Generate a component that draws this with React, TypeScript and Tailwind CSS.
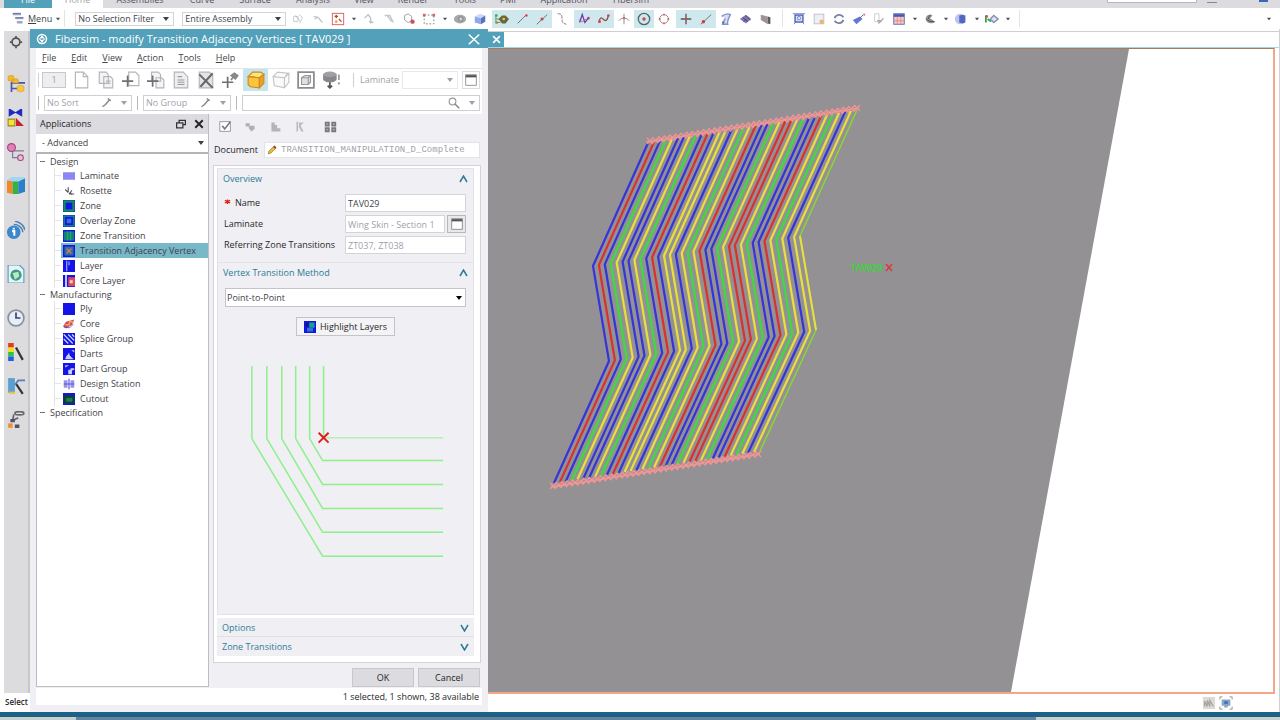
import { useState, type ReactNode } from 'react'
import clsx from 'clsx'

function Svg({ children, size = 'w-4 h-4' }: { children: ReactNode; size?: string }) {
  return (
    <svg viewBox="0 0 16 16" className={clsx(size, 'shrink-0')} fill="none" aria-hidden="true">
      {children}
    </svg>
  )
}

function Caret({ className = 'text-zinc-700' }: { className?: string }) {
  return (
    <svg viewBox="0 0 6 4" className={clsx('w-[6px] h-[4px] shrink-0', className)} aria-hidden="true">
      <path d="M0 0h6L3 4z" fill="currentColor" />
    </svg>
  )
}

const ribbonTabs = [
  { label: 'Assemblies', width: 'w-[74px]' },
  { label: 'Curve', width: 'w-[50px]' },
  { label: 'Surface', width: 'w-[56px]' },
  { label: 'Analysis', width: 'w-[60px]' },
  { label: 'View', width: 'w-[42px]' },
  { label: 'Render', width: 'w-[56px]' },
  { label: 'Tools', width: 'w-[48px]' },
  { label: 'PMI', width: 'w-[38px]' },
  { label: 'Application', width: 'w-[74px]' },
  { label: 'Fibersim', width: 'w-[60px]' },
]

interface Tool {
  name: string
  art?: ReactNode
  on?: boolean
  gap?: boolean
  kind?: 'caret' | 'sep'
}

const cubeArt = (front: string, top: string, side: string) => (
  <>
    <path d="M2 5l6-3 6 2-5 3z" fill={top} />
    <path d="M2 5l7 2v7l-7-2z" fill={front} />
    <path d="M9 7l5-3v7l-5 3z" fill={side} />
  </>
)

const tools: Tool[] = [
  { name: 'Assembly', art: <><path d="M3 5h5v6H3zM9 3l4 3-3 7" stroke="#c5c5c8" /><path d="M5 4l5 6" stroke="#b5b5b8" /></> },
  { name: 'Move up', art: <path d="M3 5l5 1 5 6M4 8l4-2" stroke="#c5c5c8" strokeWidth="1.500" /> },
  { name: 'Snap', art: <><rect x="1.500" y="1.500" width="13" height="13" stroke="#e0505a" /><path d="M4 5h4M6 3v4M9 8l3 3" stroke="#b04a30" strokeWidth="1.500" /><circle cx="6" cy="11" r="1.500" fill="#e8a040" /></> },
  { name: 'Snap list', kind: 'caret' },
  { name: 'Rotate', art: <path d="M3 7l4-4 3 4M10 7v6M8 11l5 1" stroke="#bdbdc0" strokeWidth="1.500" /> },
  { name: 'Redirect', art: <path d="M3 4h6l4 8M6 4l5 7" stroke="#c5c5c8" strokeWidth="1.500" /> },
  { name: 'Deselect', art: <><path d="M3 4l4-2 4 3v5l-4 2-4-3z" stroke="#98989c" /><circle cx="12" cy="11" r="2.500" fill="#c9505c" /></> },
  { name: 'Rectangle', art: <><rect x="2.500" y="3.500" width="11" height="10" stroke="#777" strokeDasharray="2 2" /><path d="M1 2h3v3H1zM12 2h3v3h-3z" fill="#d06a6a" /></> },
  { name: 'Rectangle list', kind: 'caret' },
  { name: 'Shaded', art: <><ellipse cx="8" cy="8" rx="7" ry="5" fill="#a8a6aa" /><circle cx="9" cy="8" r="2.500" fill="#d2d0d4" stroke="#77757a" /></> },
  { name: 'Solid body', art: cubeArt('#8ea8e8', '#c9d8f8', '#5572c4') },
  { name: 'Enable snap', on: true, gap: true, art: <><path d="M1 3v10M1 8h6M1 12h5" stroke="#4a9c4e" /><path d="M4 8l4-4h4l4 4-4 5H8z" fill="#67683c" /><circle cx="1.500" cy="4" r="1.500" fill="#30b040" /><circle cx="10" cy="8" r="1.500" fill="#e8c840" /><circle cx="2" cy="12" r="1.500" fill="#d07030" /></> },
  { name: 'End point', on: true, art: <><path d="M3 13L12 4" stroke="#666" /><circle cx="13" cy="4" r="1.500" fill="#d84050" /></> },
  { name: 'Mid point', on: true, art: <><path d="M2 14L14 3" stroke="#666" /><circle cx="8" cy="8" r="1.800" fill="#c84848" /></> },
  { name: 'Control point', art: <path d="M3 2c5 0 5 2 5 6s1 5 5 6" stroke="#7a6a70" strokeDasharray="4 1" /> },
  { name: 'Spline pole', on: true, gap: true, art: <><path d="M3 12L6 3l3 9 4-5" stroke="#6040b8" strokeWidth="1.500" /><path d="M2 9l4 2 5-3" stroke="#d05070" /><circle cx="13" cy="7" r="1.500" fill="#b04080" /></> },
  { name: 'Spline point', on: true, art: <><path d="M2 12c2-8 4-5 6-3s4 0 5-5" stroke="#905048" strokeWidth="1.500" /><circle cx="3" cy="11" r="1.500" fill="#d84050" /><circle cx="13" cy="4" r="1.500" fill="#d84050" /></> },
  { name: 'Intersection', art: <><path d="M8 2v12M2 10c3-4 9-4 12 0" stroke="#8a8084" /><circle cx="8" cy="7" r="1.300" fill="#d06060" /></> },
  { name: 'Arc center', on: true, art: <><circle cx="8" cy="8" r="6.500" stroke="#4d686c" strokeWidth="1.500" /><circle cx="8" cy="8" r="2" fill="#d04848" /></> },
  { name: 'Quadrant', art: <><circle cx="8" cy="8" r="5" stroke="#8a8088" /><path d="M8 2v2M8 12v2M2 8h2M12 8h2" stroke="#e06060" strokeWidth="2" /></> },
  { name: 'Existing point', on: true, gap: true, art: <><path d="M8 2v12M2 8h12" stroke="#555" strokeWidth="1.500" /><circle cx="8" cy="8" r="1.500" fill="#c84848" /></> },
  { name: 'Point on curve', on: true, art: <><path d="M2 14L14 3" stroke="#666" /><circle cx="5" cy="11" r="2" fill="#d04040" /></> },
  { name: 'Point on face', art: <><path d="M3 5c4-3 8-3 10-2-2 4-4 8-3 11H4c0-4 3-4 3-7" stroke="#8090c8" strokeWidth="1.500" fill="#d5dcf0" /><circle cx="5" cy="12" r="1.300" fill="#5070c0" /></> },
  { name: 'Bounded grid', art: <><path d="M1 8l7-5 6 5-6 5z" fill="#7a78b8" /><path d="M4 6l6 5M7 4l6 5M5 11l6-5" stroke="#444880" /><circle cx="9" cy="7" r="1.300" fill="#c06060" /></> },
  { name: 'Facet vertex', art: <><path d="M2 3l8 2v9l-8-5z" fill="#9a989a" /><path d="M10 5l3 1v8l-3-1z" fill="#5c5a5c" /><path d="M4 5l6 7" stroke="#c97777" /></> },
  { name: 'Separator', kind: 'sep' },
  { name: 'Fit', art: <><rect x="3.500" y="3.500" width="9" height="8" fill="#dce4fa" stroke="#4458b8" strokeWidth="1.500" /><path d="M2 14l4-4M14 14l-4-4M1 2h14" stroke="#6674b8" /><circle cx="8" cy="7" r="2" stroke="#7784c8" /></> },
  { name: 'Zoom window', art: <><rect x="2.500" y="2.500" width="11" height="11" fill="#eef0f6" stroke="#b8bcc8" /><circle cx="11" cy="11" r="2.500" fill="#e8b868" /></> },
  { name: 'Rotate view', art: <><path d="M13 6a5.500 5.500 0 0 0-10 1M3 10a5.500 5.500 0 0 0 10-1" stroke="#7480a8" strokeWidth="2" /></> },
  { name: 'Brush', art: <><path d="M1 9l8-4 3 3-7 6z" fill="#6078d0" /><path d="M9 7l4-4" stroke="#667" /><circle cx="14" cy="3" r="1.200" fill="#e08080" /></> },
  { name: 'Perspective', art: <><path d="M3 2h5v9H3z" stroke="#c8c8cc" /><path d="M7 13l3-2 3-4M6 10h4" stroke="#a8a8ac" strokeWidth="1.500" /></> },
  { name: 'Layout', art: <><rect x="2" y="2" width="12" height="12" fill="#f6c9c4" stroke="#5064b8" /><path d="M2 4h12" stroke="#4458b8" strokeWidth="3" /><path d="M6 6v8M10 6v8M2 10h12" stroke="#e08888" /></> },
  { name: 'Layout list', kind: 'caret' },
  { name: 'Section', art: <><path d="M3 8c0-5 6-6 8-4L8 7l6 4c-3 3-10 3-11-3z" fill="#8f9092" /><path d="M4 8c2 3 5 3 9 3M8 3L6 8" stroke="#4d4d50" /></> },
  { name: 'Section list', kind: 'caret' },
  { name: 'Render style', art: <><circle cx="7" cy="8" r="6" fill="#bcc4f0" /><path d="M6 4l4-1 3 1v8l-3 1-4-1z" fill="#5268c0" /></> },
  { name: 'Render list', kind: 'caret' },
  { name: 'Show and hide', art: <><path d="M1 4v8M3 8l4 3" stroke="#30a050" strokeWidth="2" /><circle cx="2" cy="5" r="1.500" fill="#e04848" /><path d="M6 8l4-4 5 4-5 4z" fill="#dde0ee" stroke="#8890b0" strokeWidth="1.500" /></> },
  { name: 'Show list', kind: 'caret' },
  { name: 'Separator', kind: 'sep' },
]

function ToolStrip() {
  return (
    <div className="flex items-center">
      {tools.map((t, i) => {
        if (t.kind === 'sep') {
          return <span key={i} className="w-[13px] flex justify-center"><span className="w-px h-[17px] bg-zinc-200" /></span>
        }
        if (t.kind === 'caret') {
          return (
            <button key={i} aria-label={t.name} className="w-[11px] h-[18px] flex items-center justify-center">
              <Caret className="text-zinc-600 scale-75" />
            </button>
          )
        }
        return (
          <button
            key={i}
            aria-label={t.name}
            className={clsx('w-5 h-[18px] flex items-center justify-center', t.gap && 'ml-0.5', t.on && 'bg-[#cfe8ee]')}
          >
            <Svg size="w-[14px] h-[14px]">{t.art}</Svg>
          </button>
        )
      })}
    </div>
  )
}

function FilterSelect({ label, options, width }: { label: string; options: string[]; width: string }) {
  return (
    <label className={clsx('flex items-center h-[14px] border border-[#d4d3d8] bg-white pl-[2px] pr-1', width)}>
      <select aria-label={label} className="flex-1 min-w-0 appearance-none bg-transparent text-[9px] leading-3 text-zinc-700 outline-none">
        {options.map((o) => (
          <option key={o}>{o}</option>
        ))}
      </select>
      <Caret />
    </label>
  )
}

const railItems: { name: string; art: ReactNode; pad: string }[] = [
  { name: 'Options', pad: 'h-[42px]', art: <><circle cx="8" cy="8" r="4.500" stroke="#555" strokeWidth="2" /><path d="M8 1v2M8 13v2M1 8h2M13 8h2" stroke="#555" strokeWidth="2" /></> },
  { name: 'Assembly navigator', pad: 'h-[34px]', art: <><path d="M4 6v9M4 12h5M4 7h12" stroke="#4a56a8" strokeWidth="1.500" /><path d="M1 1l3-1 2 1v4H1zM5 4l3-1 2 1v3H5z" fill="#f4b820" stroke="#d89a20" strokeWidth=".5" /><path d="M9 10l3-1 3 1v4l-3 1-3-1z" fill="#f6c83c" stroke="#d89a20" strokeWidth=".5" /></> },
  { name: 'Constraint navigator', pad: 'h-[34px]', art: <><path d="M2 0l5 3-5 3zM13 0L8 3l5 3z" fill="#2028c8" stroke="#2028c8" /><path d="M1 9h6v6H1z" fill="#f5e436" stroke="#a08820" /><path d="M8 8l7 7H8z" fill="#c82030" /></> },
  { name: 'Part navigator', pad: 'h-[34px]', art: <><path d="M5 5v8h5M6 7h9" stroke="#80789c" /><circle cx="4" cy="4" r="3.500" fill="#e080b4" stroke="#a04880" /><circle cx="12" cy="13" r="2.500" fill="#eac0d8" stroke="#a05888" /></> },
  { name: 'Reuse library', pad: 'h-[44px]', art: <><path d="M0 3l5-2v14l-5-1z" fill="#f08828" /><path d="M5 4l5-2v13H5z" fill="#38b048" /><path d="M10 4l6-3v12l-6 2z" fill="#2a80c8" /><path d="M0 3l4-3h12l-6 4H6z" fill="#9cd8f0" /></> },
  { name: 'Web browser', pad: 'h-[44px]', art: <><circle cx="6" cy="10" r="6" fill="#3c86cc" /><path d="M6 6v1.500M4.500 9H6.500v4" stroke="#fff" strokeWidth="1.800" /><path d="M6 3c4 0 8 3 8 7M7 0c4 1 8 4 9 8" stroke="#4880b8" strokeWidth="1.300" /></> },
  { name: 'History', pad: 'h-[44px]', art: <><path d="M1 0h10l4 4v12H1z" fill="#e6f3fa" stroke="#5a9cc0" /><circle cx="8" cy="9" r="5" fill="#3a9c78" /><path d="M5 7l5-1 1 4-4 3z" fill="#b8e8c8" /></> },
  { name: 'Clock', pad: 'h-[34px]', art: <><circle cx="8" cy="8" r="7" fill="#e8eef8" stroke="#8890a0" strokeWidth="1.500" /><path d="M8 3v5h4" stroke="#3a4468" strokeWidth="1.500" /></> },
  { name: 'Materials', pad: 'h-[34px]', art: <><path d="M1 0h5v4H1z" fill="#e83820" /><path d="M1 4h5v4H1z" fill="#f0e020" /><path d="M1 8h5v4H1z" fill="#30c048" /><path d="M1 12h5v4H1z" fill="#2060e0" /><path d="M8 4l6 11" stroke="#333" strokeWidth="2" /></> },
  { name: 'Process studio', pad: 'h-[34px]', art: <><path d="M1 1h6v13H1z" fill="#58a0d0" /><path d="M2 14h5" stroke="#f0c040" strokeWidth="2" /><path d="M8 6l6 9" stroke="#333" strokeWidth="2" /><path d="M7 7l3-4h6" stroke="#5a7cb8" strokeWidth="1.500" /></> },
  { name: 'Manufacturing', pad: 'h-[34px]', art: <><path d="M5 9l1-6M6 8l4-2" stroke="#666" strokeWidth="1.500" /><ellipse cx="11" cy="2" rx="4" ry="1.500" stroke="#666" strokeWidth="1.500" /><path d="M1 11h4v4H1z" fill="#f09030" /><path d="M3 7h4v3H3zM7 12h4v3H7z" fill="#505068" /></> },
]

const G = '#b4b4b8'
const actionTools: { name: string; art: ReactNode; on?: boolean }[] = [
  { name: 'New', art: <><path d="M3 1h7l4 4v10H3z" fill="#fff" stroke={G} /><path d="M10 1v4h4" stroke={G} /></> },
  { name: 'Copy', art: <><path d="M2 1h6l2 2v8H2zM6 5h6l2 2v8H6z" fill="#f4f4f6" stroke={G} /><path d="M8 9h4M8 11h4" stroke={G} /></> },
  { name: 'Insert', art: <><path d="M6 1h6l3 3v9H6z" fill="#fff" stroke={G} /><path d="M0 9h10M5 4v10" stroke="#707074" strokeWidth="1.500" /></> },
  { name: 'Insert copy', art: <><path d="M4 1h6l2 2v6H4zM8 6h5l2 2v7H8z" fill="#f4f4f6" stroke={G} /><path d="M0 9h10M5 4v10" stroke="#707074" strokeWidth="1.500" /></> },
  { name: 'Edit', art: <><path d="M2 1h8l4 4v10H2z" fill="#eeeef0" stroke={G} /><path d="M5 5h4M5 8h6M5 10h6M5 12h6" stroke="#98989c" /></> },
  { name: 'Delete', art: <><path d="M2 1h9l3 3v11H2z" fill="#e4e4e6" stroke={G} /><path d="M2 3l12 12M14 2L3 14" stroke="#68686c" strokeWidth="1.800" /></> },
  { name: 'Link', art: <><path d="M0 10h10M5 5v10" stroke="#707074" strokeWidth="1.500" /><path d="M7 4l4-3 4 3-3 4z" fill="#88888c" /><path d="M11 4l-3 4" stroke="#88888c" strokeWidth="1.500" /></> },
  { name: 'Shaded box', on: true, art: <><path d="M1 5l4-4h7l3 2-4 3z" fill="#fde47c" stroke="#d08820" /><path d="M1 5l10 1v9l-8-1-2-2z" fill="#fbc43a" stroke="#d08820" /><path d="M11 6l4-3v8l-4 4z" fill="#eda024" stroke="#d08820" /></> },
  { name: 'Wire box', art: <><path d="M1 5l4-4 9 1-3 4zM1 5l10 1v9L2 13zM11 6l4-4v8l-4 5" fill="#fafafa" stroke="#c4c4c8" /></> },
  { name: 'Zoom to', art: <><rect x="1" y="1" width="14" height="14" stroke="#88888c" strokeWidth="1.500" /><path d="M4 6l3-2h5v6l-2 2H4zM4 6h6v6M10 6l2-2" fill="#e0e0e4" stroke="#98989c" /></> },
  { name: 'Export', art: <><path d="M1 3v5c3 3 9 3 12 0V3z" fill="#88888c" /><ellipse cx="7" cy="3" rx="6" ry="2.500" fill="#a0a0a4" /><path d="M7 10v5M5 13l2 2 2-2" stroke="#555" strokeWidth="1.500" /><path d="M15 3v5M15 10v2" stroke="#999" strokeWidth="1.500" /></> },
]

const B = '#1414e6'
const squareArt = (inner: ReactNode) => (
  <>
    <rect x="0" y="0" width="16" height="16" fill={B} />
    {inner}
  </>
)

const tree: { label: string; items: { label: string; art: ReactNode }[] }[] = [
  {
    label: 'Design',
    items: [
      { label: 'Laminate', art: <rect x="0" y="3" width="16" height="10" fill="#8c86f0" /> },
      { label: 'Rosette', art: <path d="M7 3v6M3 6l4 4M8 12l4-5M8 12h7M10 10l2 3" stroke="#555" strokeWidth="1.500" /> },
      { label: 'Zone', art: squareArt(<rect x="2" y="2" width="12" height="12" stroke="#12905c" strokeWidth="3" />) },
      { label: 'Overlay Zone', art: squareArt(<><rect x="1.500" y="1.500" width="13" height="13" stroke="#108888" strokeWidth="2" /><path d="M5 5h6v6H5z" fill="#3c70d0" /></>) },
      { label: 'Zone Transition', art: squareArt(<><path d="M1 2h14v12H1z" fill="#127a88" /><path d="M6 2v12M10 2v12" stroke="#20b050" strokeWidth="2" /></>) },
      { label: 'Transition Adjacency Vertex', art: squareArt(<><rect x="2" y="2" width="12" height="12" fill="#2f70a0" /><path d="M5 5l6 6M11 5l-6 6" stroke="#d87860" strokeWidth="2" /></>) },
      { label: 'Layer', art: squareArt(<path d="M5 1v14M8 2v5" stroke="#a8b4f8" strokeWidth="1.500" />) },
      { label: 'Core Layer', art: squareArt(<><path d="M4 0v16" stroke="#fff" strokeWidth="2" /><path d="M7 3h9v12H7z" fill="#d84868" /><path d="M9 7h4v4H9z" fill="#f8d0a8" /></>) },
    ],
  },
  {
    label: 'Manufacturing',
    items: [
      { label: 'Ply', art: squareArt(null) },
      { label: 'Core', art: <><path d="M0 11l4-6 11-3-3 7-8 5z" fill="#d84860" /><path d="M3 9h5l1-4h5" stroke="#f0a858" strokeWidth="2" /><path d="M1 12l8 1 5-5" stroke="#5040c0" /></> },
      { label: 'Splice Group', art: squareArt(<path d="M1 8l6 6M1 2l12 12M7 2l8 8M12 2l3 3" stroke="#d0d8ff" strokeWidth="1.500" />) },
      { label: 'Darts', art: squareArt(<path d="M3 15c1-5 4-6 5-9l1 4 5 5M11 3h4v3" fill="#c8ccff" />) },
      { label: 'Dart Group', art: squareArt(<path d="M3 3h5l-5 3M7 15V9h3v-2h5v2l-3 1v5" fill="#c8ccff" />) },
      { label: 'Design Station', art: <><path d="M1 3h5v10H1zM10 3h5v10h-5z" fill="#9894ee" /><path d="M8 1v14M1 8h14" stroke="#5a54d8" strokeWidth="1.500" /></> },
      { label: 'Cutout', art: squareArt(<><rect x="1" y="3" width="14" height="11" fill="#0c4030" /><path d="M5 7h7v4H5z" fill="#108050" stroke="#208850" /></>) },
    ],
  },
  { label: 'Specification', items: [] },
]

function ApplicationsPanel() {
  const [selected, setSelected] = useState('Transition Adjacency Vertex')
  return (
    <section className="w-[173px] shrink-0 flex flex-col border-r border-[#bdbcc2] bg-white">
      <div className="h-[20px] flex items-center gap-2 bg-[#dcdbe0] pl-1 pr-1 text-zinc-800">
        <h2 className="flex-1 text-[9px] leading-3 font-medium">Applications</h2>
        <button aria-label="Float"><Svg size="w-[10px] h-[10px] block"><path d="M5 5V2h10v7h-3M1 6h10v8H1z" stroke="#333" strokeWidth="2" /></Svg></button>
        <button aria-label="Close panel"><Svg size="w-[10px] h-[10px] block"><path d="M2 2l12 12M14 2L2 14" stroke="#222" strokeWidth="3" /></Svg></button>
      </div>
      <label className="h-[20px] flex items-center border-b-2 border-[#b4b3b8] pl-[6px] pr-1">
        <select aria-label="Application level" className="flex-1 min-w-0 appearance-none bg-transparent text-[9px] leading-3 text-zinc-700 outline-none">
          <option>- Advanced</option>
        </select>
        <Caret />
      </label>
      <ul className="flex-1 border-l border-b border-[#bdbcc2] pt-px text-[9px] text-zinc-700">
        {tree.map((group) => (
          <li key={group.label}>
            <div className="h-[13px] flex items-center pl-[3px]">
              <span className="w-[5px] h-px bg-zinc-500 mr-[5px]" />
              {group.label}
            </div>
            <ul className="ml-[17px] border-l border-zinc-200">
              {group.items.map((item) => (
                <li key={item.label} className="flex items-center h-[15px]">
                  <span className="w-[6px] h-px bg-zinc-200" />
                  <button
                    onClick={() => setSelected(item.label)}
                    className={clsx(
                      'flex-1 h-[15px] flex items-center gap-[5px] pl-[2px] text-left whitespace-nowrap',
                      selected === item.label && 'bg-[#78b8c8]',
                    )}
                  >
                    <Svg size="w-[12px] h-[12px]">{item.art}</Svg>
                    {item.label}
                  </button>
                </li>
              ))}
            </ul>
          </li>
        ))}
      </ul>
    </section>
  )
}

function SectionHeader({ title, open, onClick }: { title: string; open: boolean; onClick: () => void }) {
  return (
    <button onClick={onClick} aria-expanded={open} className="w-full h-[19px] flex items-center justify-between pl-[5px] pr-[5px] text-[9px] font-medium text-[#2b7c98]">
      {title}
      <svg viewBox="0 0 9 8" className="w-[9px] h-[8px]" fill="none" aria-hidden="true">
        <path d={open ? 'M1 7L4.500 1L8 7' : 'M1 1l3.500 6L8 1'} stroke="#2b7c98" strokeWidth="1.500" />
      </svg>
    </button>
  )
}

const offsets = [
  [34, 206],
  [49, 182],
  [64, 158],
  [78, 134],
  [92, 110],
]

function OffsetDiagram() {
  return (
    <svg viewBox="0 0 256 232" className="w-full" fill="none" role="img" aria-label="Point-to-Point offsets">
      <g stroke="#8cf08c" strokeWidth="1.500">
        {offsets.map(([x, y]) => (
          <path key={x} d={`M${x} 15V88L105 ${y}H226`} />
        ))}
        <path d="M106 15V87" />
        <path d="M106 87H226" stroke="#b4f0b4" />
      </g>
      <path d="M101 82l10 10M111 82l-10 10" stroke="#dc2020" strokeWidth="2" />
    </svg>
  )
}

function PickIcon() {
  return <Svg size="w-[12px] h-[12px]"><rect x="1" y="1" width="14" height="14" fill="#fff" stroke="#777" /><path d="M1 3h14" stroke="#555" strokeWidth="3" /></Svg>
}

const field = 'w-full min-w-0 border border-[#d4d3d8] bg-white px-[2px] text-[9px] leading-3 outline-none'

function VertexForm() {
  const [open, setOpen] = useState({ overview: true, method: true, options: false, zones: false })
  const [name, setName] = useState('TAV029')
  const toggle = (key: keyof typeof open) => setOpen({ ...open, [key]: !open[key] })

  return (
    <div className="flex-1 min-w-0 flex flex-col pl-[4px]">
      <div className="h-[24px] flex items-center pl-[6px] gap-[12px]">
        <button aria-label="Validate"><Svg size="w-[13px] h-[13px] block"><path d="M1 2h13v12H1z" fill="#fff" stroke="#888" /><path d="M4 7l3 4 7-9" stroke="#777" strokeWidth="2" /></Svg></button>
        <button aria-label="Link zones"><Svg size="w-[13px] h-[13px] block"><path d="M2 4h5v4H2zM6 7h7v4l-4 3-3-4z" fill="#b0b0b4" /></Svg></button>
        <button aria-label="Stack"><Svg size="w-[13px] h-[13px] block"><path d="M3 3h4v3h3v4h4v4H3z" fill="#b4b4b8" /></Svg></button>
        <button aria-label="Unlink"><Svg size="w-[13px] h-[13px] block"><path d="M3 2h2v12H3zM6 3h6L8 7l4 7H9L6 9z" fill="#bcbcc0" /></Svg></button>
        <button aria-label="Grid" className="ml-[5px]"><Svg size="w-[13px] h-[13px] block"><path d="M1 2h6v6H1zM9 2h6v6H9zM1 9h6v6H1zM9 9h6v6H9z" fill="#78787c" /><path d="M3 5h2M11 5h2M3 12h2M11 12h2" stroke="#ddd" /></Svg></button>
      </div>
      <div className="h-[24px] mb-[3px] flex items-center gap-[3px] pl-px pr-px text-[9px] font-medium text-zinc-800">
        <label htmlFor="document" className="w-[47px]">Document</label>
        <div className="flex-1 min-w-0 h-[16px] flex items-center gap-1 bg-white border border-[#e4e3e8] pl-[2px]">
          <Svg size="w-[10px] h-[10px]"><path d="M2 14l1-4 8-8 3 3-8 8z" fill="#f0c030" stroke="#806020" /><path d="M11 2l3 3" stroke="#a03030" strokeWidth="3" /></Svg>
          <input id="document" readOnly value="TRANSITION_MANIPULATION_D_Complete" className="flex-1 min-w-0 bg-transparent font-['Liberation_Mono',monospace] text-[9px] leading-3 font-normal text-zinc-400 outline-none" />
        </div>
      </div>
      <div className="flex-1 flex flex-col bg-white border border-[#d4d3d8] pt-[2px] pb-[6px] pl-[3px] pr-[6px]">
        <div className="bg-[#f0eff3] border border-[#e2e1e6] h-[95px]">
          <SectionHeader title="Overview" open={open.overview} onClick={() => toggle('overview')} />
          {open.overview && (
            <div className="grid grid-cols-[121px_minmax(0,1fr)] gap-y-[3px] items-center pl-[6px] pr-[7px] pt-[6px] text-[9px] font-medium text-zinc-800">
              <label htmlFor="name" className="flex items-center gap-[4px]">
                <Svg size="w-[7px] h-[12px]"><path d="M8 0v10M2 2l12 6M14 2L2 8" stroke="#dc2020" strokeWidth="3" /></Svg>
                Name
              </label>
              <input id="name" value={name} onChange={(e) => setName(e.target.value)} className={clsx(field, 'h-[18px] text-zinc-700')} />
              <label htmlFor="laminate">Laminate</label>
              <div className="flex gap-[2px]">
                <input id="laminate" readOnly value="Wing Skin - Section 1" className={clsx(field, 'flex-1 h-[18px] text-zinc-400')} />
                <button aria-label="Choose laminate" className="w-[19px] h-[18px] shrink-0 flex items-center justify-center border border-[#b8b7bc] bg-[#e8e7ea]"><PickIcon /></button>
              </div>
              <label htmlFor="zones" className="whitespace-nowrap">Referring Zone Transitions</label>
              <input id="zones" readOnly value="ZT037, ZT038" className={clsx(field, 'h-[18px] text-zinc-400')} />
            </div>
          )}
        </div>
        <div className="flex-1 bg-[#f0eff3] border border-t-0 border-[#e2e1e6]">
          <SectionHeader title="Vertex Transition Method" open={open.method} onClick={() => toggle('method')} />
          {open.method && (
            <div className="flex flex-col items-center pt-[6px]">
              <label className="self-stretch mx-[7px] h-[19px] flex items-center border border-[#c4c3c8] bg-white pl-px pr-[3px]">
                <select aria-label="Vertex transition method" className="flex-1 min-w-0 appearance-none bg-transparent text-[9px] leading-3 text-zinc-700 outline-none">
                  <option>Point-to-Point</option>
                </select>
                <Caret className="text-black" />
              </label>
              <button className="mt-[10px] h-[19px] px-[7px] flex items-center gap-[4px] border border-[#c4c3c8] bg-[#f4f3f6] text-[9px] font-medium text-zinc-800">
                <Svg size="w-[12px] h-[12px]">{squareArt(<><path d="M7 2h7v7H7z" fill="#18a088" /><path d="M4 9h8v5H4z" fill="#2878c8" /><path d="M2 3h4v4H2z" fill="#102060" /></>)}</Svg>
                Highlight Layers
              </button>
              <div className="w-full mt-[15px]"><OffsetDiagram /></div>
            </div>
          )}
        </div>
        <div className="mt-[3px] h-[19px] bg-[#f0eff3] border-b border-[#e2e1e6]">
          <SectionHeader title="Options" open={open.options} onClick={() => toggle('options')} />
        </div>
        <div className="h-[19px] bg-[#f0eff3]">
          <SectionHeader title="Zone Transitions" open={open.zones} onClick={() => toggle('zones')} />
        </div>
      </div>
      <div className="h-[24px] flex items-end justify-end gap-[4px] pr-px text-[9px] font-medium text-zinc-800">
        <button className="w-[62px] h-[19px] border border-[#c8c7cc] bg-[#dcdbe0]">OK</button>
        <button className="w-[62px] h-[19px] border border-[#c8c7cc] bg-[#dcdbe0]">Cancel</button>
      </div>
    </div>
  )
}

function MiniCombo({ text }: { text: string }) {
  return (
    <button disabled className="w-[88px] h-[16px] flex items-center border border-[#cfced3] pl-[2px] pr-[4px] text-[9px] text-zinc-400">
      <span className="flex-1 text-left">{text}</span>
      <Svg size="w-[12px] h-[12px] mr-[8px]"><path d="M2 13l4-3 6-7M9 2l4 3" stroke="#888" strokeWidth="2" /></Svg>
      <Caret className="text-zinc-400" />
    </button>
  )
}

const menus = [
  ['F', 'ile'],
  ['E', 'dit'],
  ['V', 'iew'],
  ['A', 'ction'],
  ['T', 'ools'],
  ['H', 'elp'],
]

function FibersimDialog() {
  return (
    <section role="dialog" aria-label="Fibersim" className="w-[458px] shrink-0 flex flex-col bg-[#f0eff3]">
      <header className="h-[19px] flex items-center bg-[#52a0b9] pl-[6px] pr-[8px] text-white">
        <Svg size="w-[12px] h-[12px]"><circle cx="8" cy="8" r="6" stroke="#fff" strokeWidth="2" /><path d="M8 3l4 5-4 5-4-5z" fill="#fff" /><path d="M6 8h4" stroke="#52a0b9" strokeWidth="2" /></Svg>
        <h1 className="flex-1 pl-[7px] text-[11px] leading-3">Fibersim - modify Transition Adjacency Vertices [ TAV029 ]</h1>
        <button aria-label="Close dialog"><Svg size="w-[12px] h-[12px] block"><path d="M1 2l14 13M15 2L1 15" stroke="#fff" strokeWidth="2" /></Svg></button>
      </header>
      <div className="mx-[6px]">
        <nav className="h-[20px] flex items-center gap-[15px] bg-white pl-[6px] text-[9px] font-medium text-zinc-700">
          {menus.map(([key, rest]) => (
            <button key={key} className="whitespace-nowrap"><u>{key}</u>{rest}</button>
          ))}
        </nav>
        <div className="h-[23px] flex items-center bg-white border-t border-[#e4e3e8] pl-[2px] pr-[2px]">
          <span className="w-px h-[14px] bg-[#cfced3]" />
          <div className="ml-[3px] mr-[2px] w-[24px] h-[16px] shrink-0 border border-[#c8c7cc] bg-[#eeedf0] text-[9px] leading-[14px] text-center text-zinc-400">1</div>
          <div className="flex">
            {actionTools.map((t) => (
              <button key={t.name} aria-label={t.name} className={clsx('w-[25px] h-[22px] flex items-center justify-center', t.on && 'bg-[#c6e4ec]')}>
                <Svg size="w-[18px] h-[18px]">{t.art}</Svg>
              </button>
            ))}
          </div>
          <span className="ml-[10px] mr-[6px] w-px h-[14px] bg-[#cfced3]" />
          <label htmlFor="kind" className="w-[42px] text-[9px] text-zinc-400">Laminate</label>
          <div className="flex-1 min-w-0 h-[18px] flex items-center border border-[#e8e7eb] pr-[4px]">
            <select id="kind" disabled className="flex-1 min-w-0 appearance-none bg-transparent text-[9px] outline-none" />
            <Caret className="text-zinc-400" />
          </div>
          <button aria-label="Pick laminate" className="ml-[4px] w-[18px] h-[18px] shrink-0 flex items-center justify-center border border-[#dddce0]"><PickIcon /></button>
        </div>
        <div className="h-[23px] flex items-center bg-white pl-[2px] pr-[2px]">
          <span className="w-px h-[14px] bg-[#b8b7bc] mr-[5px]" />
          <MiniCombo text="No Sort" />
          <span className="w-px h-[14px] bg-[#b8b7bc] mx-[5px]" />
          <MiniCombo text="No Group" />
          <span className="w-px h-[14px] bg-[#b8b7bc] mx-[5px]" />
          <div className="flex-1 h-[16px] flex items-center border border-[#cfced3] pr-[4px]">
            <input aria-label="Search" className="flex-1 min-w-0 bg-transparent px-1 text-[9px] outline-none" />
            <Svg size="w-[12px] h-[12px] mr-[9px]"><circle cx="6" cy="6" r="4.500" stroke="#98989c" strokeWidth="1.500" /><path d="M9 9l6 6" stroke="#88888c" strokeWidth="2" /></Svg>
            <Caret className="text-zinc-400" />
          </div>
        </div>
      </div>
      <div className="flex-1 flex pl-[6px] pr-[7px]">
        <ApplicationsPanel />
        <VertexForm />
      </div>
      <div className="mx-[6px] mt-px mb-[7px] h-[17px] flex items-center justify-end bg-white pr-[3px] text-[9px] font-medium text-zinc-800">
        1 selected, 1 shown, 38 available
      </div>
    </section>
  )
}

const strandColors: Record<string, string> = {
  B: '#3434d8',
  R: '#dc3030',
  G: '#3cdc3c',
  Y: '#ecdf3c',
  L: '#88d834',
}
const strands = 'BRBGYBBYGBRBYYBYGYRBBGYRRYGBBRYGYBYL'.split('')

// first and last strand, the rest is interpolated between them
const firstStrand = [[160, 94], [105, 217], [121, 312], [66, 434]]
const lastStrand = [[369, 61], [312, 187], [328, 281], [272, 402]]

function strandPath(i: number) {
  const t = i / (strands.length - 1)
  const pts = firstStrand.map(([x, y], k) => {
    const [lx, ly] = lastStrand[k]
    return `${(x + (lx - x) * t).toFixed(1)} ${(y + (ly - y) * t).toFixed(1)}`
  })
  return `M${pts.join('L')}`
}

function crosses(x0: number, y0: number, x1: number, y1: number) {
  let d = ''
  for (let i = 0; i < 38; i++) {
    const x = x0 + ((x1 - x0) * i) / 37
    const y = y0 + ((y1 - y0) * i) / 37
    d += `M${x - 3} ${y - 3}l6 6M${x + 3} ${y - 3}l-6 6`
  }
  return d
}

function Viewport() {
  return (
    <svg viewBox="0 0 785 643" preserveAspectRatio="xMinYMin slice" className="w-full flex-1 min-h-0" fill="none" role="img" aria-label="Wing skin plies">
      <path d="M0 0H641L523 643H0z" fill="#939194" />
      {strands.map((c, i) => (
        <path key={i} d={strandPath(i)} stroke={strandColors[c]} strokeWidth={c === 'L' ? 1.5 : 2.2} />
      ))}
      {/* last strand is yellow where it runs down the middle */}
      <path d="M312 187L328 281" stroke="#ecdf3c" strokeWidth="2" />
      <g stroke="#f49494" strokeWidth="1.300">
        <path d={crosses(162, 92, 369, 59)} />
        <path d="M158 93L371 59M63 438L272 405" />
        <path d={crosses(65, 437, 270, 405)} />
      </g>
      <text x="363" y="222" className="font-['Open_Sans',sans-serif] text-[9px]" fill="#30dc30" stroke="#30dc30" strokeWidth=".3">TAV029</text>
      <path d="M398 215l6 7M404 215l-6 7" stroke="#dc3838" strokeWidth="1.500" />
    </svg>
  )
}

export default function App() {
  return (
    <div className="min-h-screen flex flex-col bg-white font-['Open_Sans','Liberation_Sans',sans-serif] overflow-hidden">
      <nav className="h-2 flex items-end overflow-hidden bg-[#dcdbe0] pl-1 text-[9px] leading-4 text-zinc-600">
        <button className="w-12 bg-[#52a0b9] text-white text-center">File</button>
        <button className="w-[51px] bg-white text-zinc-400 text-center">Home</button>
        {ribbonTabs.map((t) => (
          <button key={t.label} className={clsx('text-center whitespace-nowrap', t.width)}>{t.label}</button>
        ))}
        <span className="flex-1" />
        <span className="w-[90px] h-[6px] mb-[5px] bg-white border border-[#b8b7bc]" />
        <span className="w-[10px] h-[5px] mb-[5px] mx-[10px] border-b border-[#88878c]" />
        <span className="w-[9px] h-[4px] mb-[6px] ml-8 mr-3 bg-[#3468b8]" />
      </nav>

      <div className="h-[21px] flex items-center bg-white pl-3 pr-2">
        <button className="flex items-center gap-[3px] pr-[3px] text-[9px] font-medium text-zinc-700">
          <Svg size="w-[13px] h-[13px]"><path d="M1 1h10v3H1zM4 6h10v3H4zM6 11h7v3H6z" fill="#a0a8c0" /><path d="M1 2h10M4 7h10" stroke="#606c98" /></Svg>
          <span><u>M</u>enu</span>
          <Caret className="text-zinc-600 scale-75" />
        </button>
        <span className="w-px h-[17px] bg-zinc-200 mr-[10px]" />
        <FilterSelect label="Selection filter" options={['No Selection Filter']} width="w-[99px]" />
        <span className="w-2" />
        <FilterSelect label="Selection scope" options={['Entire Assembly', 'Within Work Part Only']} width="w-[104px]" />
        <span className="w-[2px]" />
        <ToolStrip />
        <span className="flex-1" />
        <Caret className="text-zinc-600 scale-75" />
      </div>

      <div className="flex-1 flex">
        <aside className="w-[30px] shrink-0 flex flex-col bg-white">
          <div className="mt-[2px] ml-1 flex-1 flex flex-col items-center bg-[#dcdbde] border-r-2 border-[#c6c5ca]">
            {railItems.map((r) => (
              <button key={r.name} aria-label={r.name} className={clsx('flex items-start justify-center pt-[2px]', r.pad)}>
                <Svg size={r.name === 'Options' ? 'w-[14px] h-[14px] mt-[2px]' : 'w-[18px] h-[18px]'}>{r.art}</Svg>
              </button>
            ))}
          </div>
          <div className="h-[19px] overflow-hidden pl-[5px] text-[8px] leading-[18px] font-semibold text-zinc-800">Select</div>
        </aside>

        <FibersimDialog />

        <main className="flex-1 min-w-0 flex flex-col pt-[2px] border-r border-[#d0cfd4]">
          <div className="h-[17px] flex border-t border-[#cfced3] border-b border-b-[#a8d4de]">
            <button aria-label="Close view" className="w-4 flex items-center justify-center bg-[#52a0b9]">
              <Svg size="w-[9px] h-[9px]"><path d="M2 2l12 12M14 2L2 14" stroke="#fff" strokeWidth="3" /></Svg>
            </button>
          </div>
          <div className="flex-1 flex flex-col mr-1 border-t border-t-[#a07c60] border-r-2 border-b-2 border-[#f0a888]">
            <Viewport />
          </div>
          <div className="h-[18px] flex items-center justify-end gap-[3px] pr-[46px]">
            <Svg size="w-[14px] h-[14px]"><rect x="1" y="1" width="14" height="14" fill="#dcdad6" /><path d="M3 12V6l3 6V5l3 7V5l4 7" stroke="#a8a4a0" strokeWidth="1.500" /></Svg>
            <Svg size="w-[14px] h-[14px]"><path d="M1 1h3M1 1v3M15 1h-3M15 1v3M1 15h3M1 15v-3M15 15h-3M15 15v-3" stroke="#888" /><path d="M3 4h10v7H3zM6 11h4v2H6z" fill="#88a4c8" /><path d="M6 6h4v3H6z" fill="#3c70b0" /></Svg>
          </div>
        </main>
      </div>

      <footer className="h-2 border-t-[5px] border-[#1d6088] bg-[#c8d0cc]">
        <div className="h-[3px] w-3/4 ml-[76px] bg-[#66829c]" />
      </footer>
    </div>
  )
}
